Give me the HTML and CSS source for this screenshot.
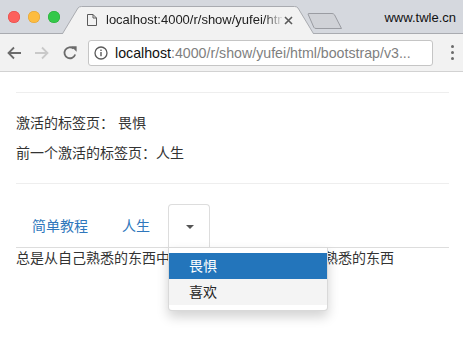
FILE: index.html
```html
<!DOCTYPE html>
<html lang="zh-CN">
<head>
    <meta charset="UTF-8">
    <title>Bootstrap 标签页</title>
    <link rel="stylesheet" href="styles.css">
</head>
<body>
    <div class="browser">
        <div class="tabstrip">
            <div class="lights">
                <span class="light red"></span>
                <span class="light yellow"></span>
                <span class="light green"></span>
            </div>
            <div class="tab">
                <svg class="tab-shape" width="252" height="28" viewBox="0 0 252 28">
                    <path d="M0 28.5 L16 2 Q17.2 0.5 19.5 0.5 L232.5 0.5 Q234.8 0.5 236 2 L252 28.5" fill="#f2f2f2" stroke="#a9abb0"/>
                </svg>
                <svg class="page-icon" width="10" height="12" viewBox="0 0 10 12">
                    <path d="M0.5 0.5 H6 L9.5 4 V11.5 H0.5 Z M6 0.5 V4 H9.5" fill="none" stroke="#5a5a5a"/>
                </svg>
                <span class="tab-title">localhost:4000/r/show/yufei/html/bootstrap</span>
                <svg class="tab-close" width="9" height="9" viewBox="0 0 9 9">
                    <path d="M1 1 L8 8 M8 1 L1 8" stroke="#5a5a5a" stroke-width="1.6"/>
                </svg>
            </div>
            <svg class="newtab" width="36" height="17" viewBox="0 0 36 17">
                <path d="M1 1 Q1 0.5 2 0.5 H25 Q26.5 0.5 27.5 1.8 L34.5 15.5 H9 Q7.5 15.5 6.8 14.3 Z" fill="#d0d2d7" stroke="#9a9ca2"/>
            </svg>
            <div class="profile">www.twle.cn</div>
        </div>
        <div class="toolbar">
            <div class="nav-btn">
                <svg width="16" height="16" viewBox="0 0 16 16">
                    <path d="M15 8 H2.5 M8 2.5 L2.5 8 L8 13.5" fill="none" stroke="#6b6b6b" stroke-width="1.8"/>
                </svg>
            </div>
            <div class="nav-btn">
                <svg width="16" height="16" viewBox="0 0 16 16">
                    <path d="M1 8 H13.5 M8 2.5 L13.5 8 L8 13.5" fill="none" stroke="#c9c9c9" stroke-width="1.8"/>
                </svg>
            </div>
            <div class="nav-btn">
                <svg width="16" height="16" viewBox="0 0 16 16">
                    <path d="M13.2 9.5 A5.5 5.5 0 1 1 11.6 3.6" fill="none" stroke="#6b6b6b" stroke-width="1.8"/>
                    <path d="M9 1.2 H14.6 V6.8 Z" fill="#6b6b6b"/>
                </svg>
            </div>
            <div class="omnibox">
                <svg class="info-icon" width="14" height="14" viewBox="0 0 14 14">
                    <circle cx="7" cy="7" r="6" fill="none" stroke="#5a5a5a" stroke-width="1.3"/>
                    <rect x="6.3" y="6" width="1.4" height="4.2" fill="#5a5a5a"/>
                    <rect x="6.3" y="3.6" width="1.4" height="1.4" fill="#5a5a5a"/>
                </svg>
                <span class="url"><span class="host">localhost</span>:4000/r/show/yufei/html/bootstrap/v3...</span>
            </div>
            <div class="menu-btn">
                <span class="dot"></span>
                <span class="dot"></span>
                <span class="dot"></span>
            </div>
        </div>
    </div>

    <div class="page">
        <hr>
        <p>激活的标签页： <span class="active-tab">畏惧</span></p>
        <p>前一个激活的标签页：<span class="previous-tab">人生</span></p>
        <hr>

        <ul class="nav-tabs">
            <li><a href="#home">简单教程</a></li>
            <li><a href="#life">人生</a></li>
            <li class="dropdown active">
                <a href="#" class="dropdown-toggle"><span class="caret"></span></a>
                <ul class="dropdown-menu">
                    <li class="active"><a href="#fear">畏惧</a></li>
                    <li class="hover"><a href="#like">喜欢</a></li>
                </ul>
            </li>
        </ul>
        <div class="tab-content">
            <p>总是从自己熟悉的东西中寻找安全感，畏惧那些不熟悉的东西</p>
        </div>
    </div>
</body>
</html>
```

FILE: styles.css
```css
* {
    box-sizing: border-box;
}

body {
    margin: 0;
    font-family: "Liberation Sans", "Noto Sans CJK SC", sans-serif;
    font-size: 14px;
    line-height: 20px;
    color: #333;
    background: #fff;
}

/* browser chrome */

.tabstrip {
    height: 34px;
    display: flex;
    align-items: flex-start;
    background: #d5d8de;
    box-shadow: inset 0 -1px 0 #a9abb0;
}

.lights {
    display: flex;
    gap: 8px;
    margin: 11px 0 0 7.5px;
}

.light {
    width: 12px;
    height: 12px;
    border-radius: 50%;
}

.red {
    background: #fc605c;
    box-shadow: inset 0 0 0 0.5px #df4744;
}

.yellow {
    background: #fdbc40;
    box-shadow: inset 0 0 0 0.5px #de9f34;
}

.green {
    background: #34c84a;
    box-shadow: inset 0 0 0 0.5px #27aa35;
}

.tab {
    position: relative;
    width: 252px;
    height: 28px;
    margin: 6px 0 0 2.5px;
    display: flex;
    align-items: center;
    padding: 0 0 0 25px;
}

.tab-shape {
    position: absolute;
    left: 0;
    top: 0;
}

.page-icon {
    position: relative;
    margin-right: 9px;
}

.tab-title {
    position: relative;
    width: 176px;
    font-size: 13px;
    color: #222;
    white-space: nowrap;
    overflow: hidden;
    -webkit-mask-image: linear-gradient(to right, #000 158px, transparent 178px);
}

.tab-close {
    position: relative;
    margin-left: 2px;
}

.newtab {
    margin: 13px 0 0 -7px;
}

.profile {
    margin: 8px 0 0 auto;
    padding-right: 7px;
    font-size: 13px;
    color: #111;
}

.toolbar {
    height: 38px;
    display: flex;
    align-items: center;
    background: #f2f2f2;
    border-bottom: 1px solid #d2d2d2;
}

.nav-btn {
    width: 28px;
    height: 28px;
    display: flex;
    align-items: center;
    justify-content: center;
}

.omnibox {
    width: 345px;
    height: 26px;
    margin-left: 4px;
    display: flex;
    align-items: center;
    padding-left: 5px;
    background: #fff;
    border: 1px solid #c5c5c5;
    border-radius: 3px;
}

.info-icon {
    margin-right: 7px;
}

.url {
    font-size: 14.2px;
    color: #7f7f7f;
    white-space: nowrap;
}

.host {
    color: #111;
}

.menu-btn {
    display: flex;
    flex-direction: column;
    gap: 3px;
    margin-left: 18px;
}

.dot {
    width: 3px;
    height: 3px;
    border-radius: 50%;
    background: #6b6b6b;
}

/* page */

.page {
    display: flow-root;
    min-height: 273px;
    padding: 0 14px 0 16px;
}

hr {
    margin: 20px 0;
    border: 0;
    border-top: 1px solid #eee;
}

p {
    margin: 0 0 10px;
}

.nav-tabs {
    display: flex;
    margin: 0;
    padding: 0;
    list-style: none;
    border-bottom: 1px solid #ddd;
}

.nav-tabs > li {
    position: relative;
    margin: 0 2px -1px 0;
}

.nav-tabs > li > a {
    display: block;
    padding: 10px 15px;
    line-height: 22px;
    color: #2f77bc;
    text-decoration: none;
    border: 1px solid transparent;
    border-radius: 4px 4px 0 0;
}

.nav-tabs > li.active > a {
    color: #555;
    background: #fff;
    border-color: #ddd #ddd transparent;
}

.caret {
    display: inline-block;
    width: 0;
    height: 0;
    margin-left: 2px;
    vertical-align: middle;
    border-top: 4px solid #555;
    border-left: 4px solid transparent;
    border-right: 4px solid transparent;
}

.dropdown-menu {
    position: absolute;
    top: 100%;
    left: 0;
    z-index: 10;
    min-width: 160px;
    margin: -1px 0 0;
    padding: 5px 0;
    list-style: none;
    background: #fff;
    border: 1px solid rgba(0, 0, 0, 0.15);
    border-radius: 0 0 4px 4px;
    box-shadow: 0 6px 12px rgba(0, 0, 0, 0.175);
}

.dropdown-menu > li > a {
    display: block;
    padding: 3px 20px;
    line-height: 20px;
    color: #333;
    text-decoration: none;
    white-space: nowrap;
}

.dropdown-menu > li.active > a {
    color: #fff;
    background: #2375bb;
}

.dropdown-menu > li.hover > a {
    color: #262626;
    background: #f4f4f4;
}

.tab-content p {
    margin: 0;
}
```
